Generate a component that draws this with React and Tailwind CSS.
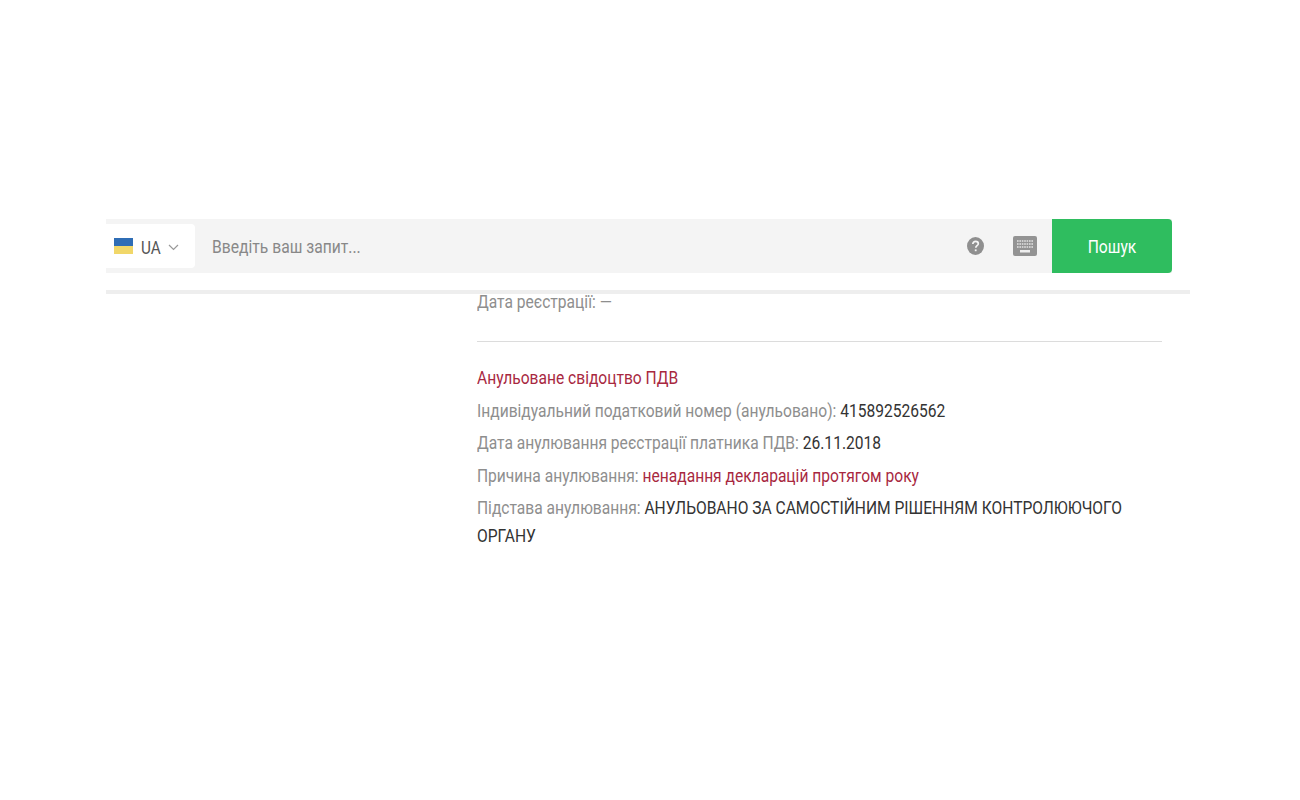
import React from 'react';

const Flag = () => (
  <svg width="19" height="18" viewBox="0 0 19 18" className="shrink-0">
    <path d="M0 1h19v8H0z" fill="#2f6db5" />
    <path d="M0 9h19v8H0z" fill="#f1d769" />
  </svg>
);

const HelpIcon = () => (
  <svg width="17" height="18" viewBox="0 0 17 18">
    <ellipse cx="8.5" cy="9" rx="8.5" ry="9" fill="#8f8f8f" />
    <path d="M5.8 7c0-1.7 1.2-2.7 2.8-2.7 1.500 0 2.700 1 2.700 2.400 0 2-2.500 2-2.500 4" fill="none" stroke="#f4f4f4" strokeWidth="1.700" />
    <rect x="7.800" y="12.400" width="1.800" height="1.800" fill="#f4f4f4" />
  </svg>
);

const KeyboardIcon = () => (
  <svg width="24" height="20" viewBox="0 0 24 20">
    <rect width="24" height="20" rx="2" fill="#939393" />
    <path d="M4 5h16M4 8h16M4 11h16" stroke="#e4e4e4" strokeWidth="1.600" strokeDasharray="1.600 0.800" />
    <rect x="7" y="14" width="10" height="2.500" fill="#eeeeee" />
  </svg>
);

export default function App() {
  return (
    <div className="min-h-[800px] bg-white pt-[219px] text-[18px] font-['Roboto',sans-serif]">
      <div className="ml-[106px] w-[1066px] h-[54px] flex bg-[#f4f4f4]">
        <div className="w-[89px] h-[44px] mt-[5px] bg-white rounded-r flex items-center pl-2 text-[#555]">
          <Flag />
          <span className="ml-2 pt-[3px] scale-x-[0.85] origin-left">UA</span>
          <svg width="11" height="7" viewBox="0 0 11 7" className="ml-[4px] mt-[2px]" fill="none" stroke="#999" strokeWidth="1.200">
            <path d="M1 1l4.500 4.500L10 1" />
          </svg>
        </div>
        <div className="flex-1 flex items-center pl-[17px] text-[#888]">
          <span className="scale-x-[0.87] origin-left">Введіть ваш запит...</span>
        </div>
        <div className="flex items-center gap-[29px] pr-[15px] pb-[1px]">
          <HelpIcon />
          <KeyboardIcon />
        </div>
        <button className="w-[120px] h-[54px] bg-[#2fbd5f] rounded-r text-white flex items-center justify-center">
          <span className="scale-x-[0.87]">Пошук</span>
        </button>
      </div>
      <div className="ml-[106px] w-[1084px] h-[4px] mt-[17px] bg-[#eeeeee]" />
      <div className="ml-[477px] w-[685px] text-[#8e8e8e]">
        <div className="w-[790px] origin-left scale-x-[0.866] h-[15px] leading-[15px]">Дата реєстрації: —</div>
        <div className="h-px bg-[#dcdcdc] mt-[32px] mb-[20px]" />
        <div className="w-[790px] origin-left scale-x-[0.866] leading-[32.500px]">
          <div className="text-[#a8283f]">Анульоване свідоцтво ПДВ</div>
          <div>Індивідуальний податковий номер (анульовано): <span className="text-[#333]">415892526562</span></div>
          <div>Дата анулювання реєстрації платника ПДВ: <span className="text-[#333]">26.11.2018</span></div>
          <div>Причина анулювання: <span className="text-[#a8283f]">ненадання декларацій протягом року</span></div>
          <div className="leading-[28px] pt-[2px]">Підстава анулювання: <span className="text-[#333]">АНУЛЬОВАНО ЗА САМОСТІЙНИМ РІШЕННЯМ КОНТРОЛЮЮЧОГО</span></div>
          <div className="leading-[28px] text-[#333]">ОРГАНУ</div>
        </div>
      </div>
    </div>
  );
}
